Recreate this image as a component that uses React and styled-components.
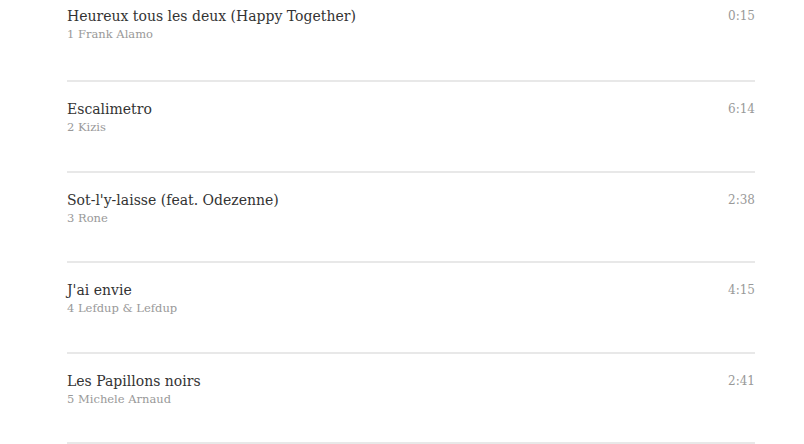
import React from "react";
import styled, { createGlobalStyle } from "styled-components";

const tracks = [
  { title: "Heureux tous les deux (Happy Together)", artist: "Frank Alamo", time: "0:15" },
  { title: "Escalimetro", artist: "Kizis", time: "6:14" },
  { title: "Sot-l'y-laisse (feat. Odezenne)", artist: "Rone", time: "2:38" },
  { title: "J'ai envie", artist: "Lefdup & Lefdup", time: "4:15" },
  { title: "Les Papillons noirs", artist: "Michele Arnaud", time: "2:41" },
];

function App() {
  return (
    <>
      <GlobalStyle />
      <TrackList>
        {tracks.map((track, i) => (
          <Track key={track.title}>
            <Info>
              <Title>{track.title}</Title>
              <Artist>
                {i + 1} {track.artist}
              </Artist>
            </Info>
            <Duration>{track.time}</Duration>
          </Track>
        ))}
      </TrackList>
    </>
  );
}

export default App;

const GlobalStyle = createGlobalStyle`
  body {
    margin: 0;
    background: #fff;
    font-family: "DejaVu Serif", Georgia, serif;
    overflow: hidden;
  }
`;

const TrackList = styled.ul`
  list-style: none;
  margin: 0;
  padding: 0 49px 0 67px;
`;

const Track = styled.li`
  display: flex;
  justify-content: space-between;
  align-items: flex-start;
  height: 70.5px;
  padding-top: 18px;
  box-sizing: content-box;
  border-bottom: 2px solid #e8e8e8;
  &:first-child {
    padding-top: 7px;
    height: 73px;
  }
`;

const Info = styled.div`
  display: flex;
  flex-direction: column;
`;

const Title = styled.span`
  font-size: 14px;
  color: #333;
  line-height: 19px;
`;

const Artist = styled.span`
  font-size: 11.5px;
  color: #999;
  line-height: 16px;
`;

const Duration = styled.span`
  font-size: 12px;
  color: #999;
  line-height: 19px;
`;
